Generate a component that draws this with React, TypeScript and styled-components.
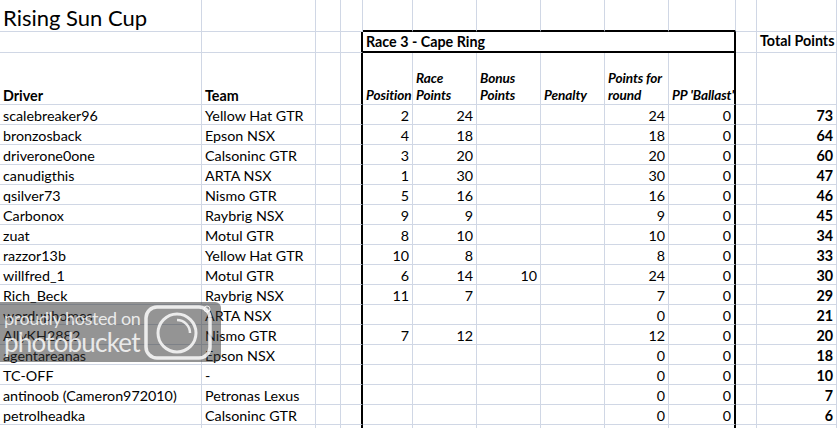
import React from "react";
import styled, { createGlobalStyle } from "styled-components";

const GRID = "#d0d7e5";
const INK = "#000";

const GlobalStyle = createGlobalStyle`
  html, body { margin: 0; padding: 0; background: #fff; }
  body { font-family: Lato, "Open Sans", sans-serif; color: #000; }
`;

const Sheet = styled.div`
  position: relative;
  display: grid;
  grid-template-columns: 202px 114px 25px 22px 50px 64px 64px 64px 64px 67px 21px 80px;
  grid-template-rows: 32px 21px 52px repeat(17, 20px);
  width: 837px;
  font-size: 14.3px;
  overflow: hidden;
`;

type CellProps = {
  $right?: boolean;
  $bold?: boolean;
  $italic?: boolean;
  $span?: number;
  $boxRight?: boolean;
  $boxBottom?: boolean;
};

const Cell = styled.div<CellProps>`
  box-sizing: border-box;
  display: flex;
  align-items: flex-end;
  justify-content: ${(p) => (p.$right ? "flex-end" : "flex-start")};
  padding: 0 3px;
  border-right: ${(p) => (p.$boxRight ? `2px solid ${INK}` : `1px solid ${GRID}`)};
  border-bottom: ${(p) => (p.$boxBottom ? `2px solid ${INK}` : `1px solid ${GRID}`)};
  grid-column: ${(p) => (p.$span ? `span ${p.$span}` : "auto")};
  font-weight: ${(p) => (p.$bold ? 700 : 400)};
  font-style: ${(p) => (p.$italic ? "italic" : "normal")};
  font-size: ${(p) => (p.$italic ? "13.6px" : "inherit")};
  letter-spacing: ${(p) => (p.$italic ? "-0.1px" : "normal")};
  white-space: nowrap;
  line-height: 17px;
  min-width: 0;
`;

const Title = styled.span`
  font-size: 22px;
  line-height: 26px;
`;

const Watermark = styled.div`
  position: absolute;
  left: 0;
  top: 302px;
  width: 221px;
  height: 60px;
  box-sizing: border-box;
  background: rgba(50, 50, 50, 0.52);
  border-radius: 0 6px 6px 0;
  display: flex;
  align-items: center;
  padding-left: 4px;
  gap: 3px;
  color: rgba(255, 255, 255, 0.82);
  pointer-events: none;
`;

const MarkText = styled.div`
  display: flex;
  flex-direction: column;
  font-family: Lato, sans-serif;
`;

const MarkSmall = styled.span`
  font-size: 18px;
  line-height: 20px;
  letter-spacing: -0.4px;
  font-weight: 400;
`;

const MarkBig = styled.span`
  font-size: 26px;
  line-height: 28px;
  letter-spacing: -0.8px;
  font-weight: 400;
`;

type Row = [string, string, string, string, string, string, string, string, string];

const rows: Row[] = [
  ["scalebreaker96", "Yellow Hat GTR", "2", "24", "", "", "24", "0", "73"],
  ["bronzosback", "Epson NSX", "4", "18", "", "", "18", "0", "64"],
  ["driverone0one", "Calsoninc GTR", "3", "20", "", "", "20", "0", "60"],
  ["canudigthis", "ARTA NSX", "1", "30", "", "", "30", "0", "47"],
  ["qsilver73", "Nismo GTR", "5", "16", "", "", "16", "0", "46"],
  ["Carbonox", "Raybrig NSX", "9", "9", "", "", "9", "0", "45"],
  ["zuat", "Motul GTR", "8", "10", "", "", "10", "0", "34"],
  ["razzor13b", "Yellow Hat GTR", "10", "8", "", "", "8", "0", "33"],
  ["willfred_1", "Motul GTR", "6", "14", "10", "", "24", "0", "30"],
  ["Rich_Beck", "Raybrig NSX", "11", "7", "", "", "7", "0", "29"],
  ["worduphomes", "ARTA NSX", "", "", "", "", "0", "0", "21"],
  ["AllyKH2882", "Nismo GTR", "7", "12", "", "", "12", "0", "20"],
  ["agentareanas", "Epson NSX", "", "", "", "", "0", "0", "18"],
  ["TC-OFF", "-", "", "", "", "", "0", "0", "10"],
  ["antinoob (Cameron972010)", "Petronas Lexus", "", "", "", "", "0", "0", "7"],
  ["petrolheadka", "Calsoninc GTR", "", "", "", "", "0", "0", "6"],
  ["", "", "", "", "", "", "", "", ""],
];

const CameraMark = () => (
  <svg width="72" height="58" viewBox="0 0 72 58">
    <rect x="3" y="4" width="64" height="51" rx="11" fill="none" stroke="rgba(255,255,255,0.82)" strokeWidth="3.5" />
    <circle cx="34" cy="30" r="19" fill="none" stroke="rgba(255,255,255,0.82)" strokeWidth="3" />
    <path d="M34 17 a13 13 0 0 1 13 13" fill="none" stroke="rgba(255,255,255,0.82)" strokeWidth="2.5" />
    <circle cx="64" cy="6" r="3" fill="none" stroke="rgba(255,255,255,0.82)" strokeWidth="1" />
  </svg>
);

export default function App() {
  return (
    <>
      <GlobalStyle />
      <Sheet>
        {/* Row 1 */}
        <Cell>
          <Title>Rising Sun Cup</Title>
        </Cell>
        <Cell />
        <Cell />
        <Cell />
        <Cell $boxBottom />
        <Cell $boxBottom />
        <Cell $boxBottom />
        <Cell $boxBottom />
        <Cell $boxBottom />
        <Cell $boxBottom />
        <Cell />
        <Cell />

        {/* Row 2 */}
        <Cell />
        <Cell />
        <Cell />
        <Cell $boxRight />
        <Cell $span={6} $bold $boxRight $boxBottom style={{ paddingBottom: 1 }}>
          Race 3 - Cape Ring
        </Cell>
        <Cell />
        <Cell $bold style={{ paddingBottom: 3 }}>Total Points</Cell>

        {/* Row 3 */}
        <Cell $bold>Driver</Cell>
        <Cell $bold>Team</Cell>
        <Cell />
        <Cell $boxRight />
        <Cell $bold $italic>Position</Cell>
        <Cell $bold $italic>
          <span>
            Race
            <br />
            Points
          </span>
        </Cell>
        <Cell $bold $italic>
          <span>
            Bonus
            <br />
            Points
          </span>
        </Cell>
        <Cell $bold $italic>Penalty</Cell>
        <Cell $bold $italic>
          <span>
            Points for
            <br />
            round
          </span>
        </Cell>
        <Cell $bold $italic $boxRight>PP 'Ballast'</Cell>
        <Cell />
        <Cell />

        {rows.map((r, i) => (
          <React.Fragment key={i}>
            <Cell>{r[0]}</Cell>
            <Cell>{r[1]}</Cell>
            <Cell />
            <Cell $boxRight />
            <Cell $right>{r[2]}</Cell>
            <Cell $right>{r[3]}</Cell>
            <Cell $right>{r[4]}</Cell>
            <Cell $right>{r[5]}</Cell>
            <Cell $right>{r[6]}</Cell>
            <Cell $right $boxRight>{r[7]}</Cell>
            <Cell />
            <Cell $right $bold>{r[8]}</Cell>
          </React.Fragment>
        ))}

        <Watermark>
          <MarkText>
            <MarkSmall>proudly hosted on</MarkSmall>
            <MarkBig>photobucket</MarkBig>
          </MarkText>
          <CameraMark />
        </Watermark>
      </Sheet>
    </>
  );
}
